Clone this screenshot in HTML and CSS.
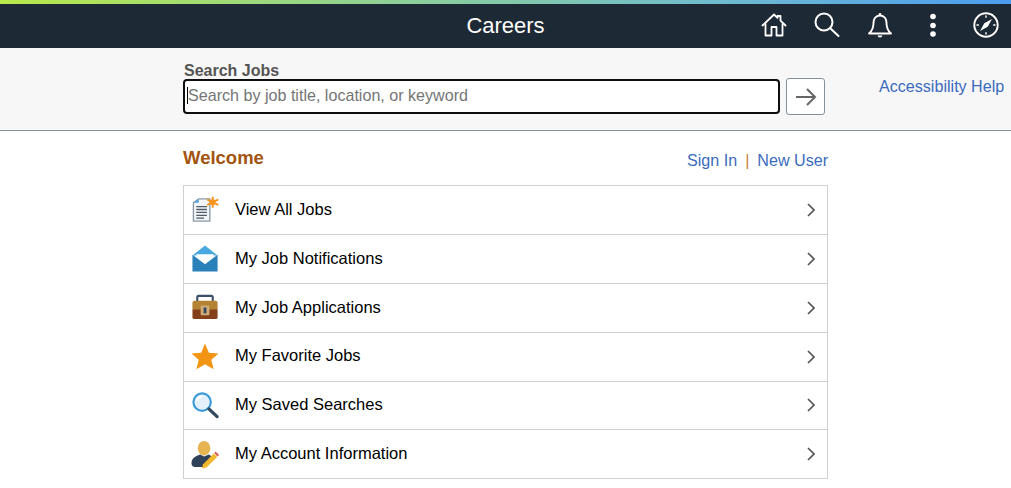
FILE: index.html
```html
<!DOCTYPE html>
<html lang="en">
<head>
<meta charset="utf-8">
<title>Careers</title>
<link rel="stylesheet" href="styles.css">
</head>
<body>
<header class="banner">
  <h1 class="banner-title">Careers</h1>
  <nav class="banner-icons">
    <a class="banner-icon" aria-label="Home"><svg width="28" height="28" viewBox="0 0 28 28" fill="none" stroke="#fff" stroke-width="1.800" stroke-linejoin="round" stroke-linecap="round"><path d="M2.500 14.500 14 3.500l3.500 3.300V5h3v4.600l5 4.900"/><path d="M5.500 13v11.500h6V16h5v8.500h6V13"/></svg></a>
    <a class="banner-icon" aria-label="Search"><svg width="28" height="28" viewBox="0 0 28 28" fill="none" stroke="#fff" stroke-width="2" stroke-linecap="round"><circle cx="11" cy="11" r="8.500"/><path d="m17.500 17.500 8 7.500"/></svg></a>
    <a class="banner-icon" aria-label="Notifications"><svg width="28" height="28" viewBox="0 0 28 28" fill="none" stroke="#fff" stroke-width="1.900" stroke-linejoin="round"><path d="M14 4.500c-4.500 0-6.500 3.500-6.500 7.500 0 5-1.500 8-4.500 10.500h22c-3-2.500-4.500-5.500-4.500-10.500 0-4-2-7.500-6.500-7.500Z"/><circle cx="14" cy="3.300" r="1.300" fill="#fff" stroke="none"/><path d="M11.500 24.500a2.600 2.600 0 0 0 5 0Z" fill="#fff" stroke="none"/></svg></a>
    <a class="banner-icon" aria-label="Actions"><svg width="28" height="28" viewBox="0 0 28 28" fill="#fff"><circle cx="14" cy="5.500" r="2.800"/><circle cx="14" cy="14.500" r="2.800"/><circle cx="14" cy="23" r="2.800"/></svg></a>
    <a class="banner-icon" aria-label="Navigator"><svg width="28" height="28" viewBox="0 0 28 28" fill="none" stroke="#fff" stroke-width="1.900" stroke-linecap="round"><circle cx="14" cy="14" r="11.700"/><path d="M20 8 12.300 12.300 8 20 15.700 15.700Z" fill="#fff" stroke="none"/><path d="M14 5v1.300M14 21.700V23M5 14h1.300M21.700 14H23" stroke-width="1.400"/></svg></a>
  </nav>
</header>

<section class="search-band">
  <form class="search-form">
    <label class="search-label" for="q">Search Jobs</label>
    <div class="search-row">
      <div class="search-input" id="q"><span class="caret"></span><span class="placeholder">Search by job title, location, or keyword</span></div>
      <button class="search-go" type="button" aria-label="Search"><svg width="22" height="20" viewBox="0 0 22 20" fill="none" stroke="#666" stroke-width="2"><path d="M1 10h19M12 2l8 8-8 8"/></svg></button>
    </div>
  </form>
  <a class="help-link">Accessibility Help</a>
</section>

<main class="content">
  <div class="welcome-row">
    <h2 class="welcome">Welcome</h2>
    <div class="auth-links"><a>Sign In</a><span class="sep">|</span><a>New User</a></div>
  </div>
  <ul class="menu">
    <li class="menu-row">
      <svg class="menu-icon" viewBox="0.500 0 30 30"><path d="M3 8 8.500 4H20v23H3Z" fill="#f2f5f7" stroke="#8a9aa6" stroke-width="1.400"/><path d="M3 8h5.500V4Z" fill="#57a5d8"/><path d="M6 12h11M6 15h11M6 18h11M6 21h11M6 24h8" stroke="#4f5b66" stroke-width="1.300"/><circle cx="23" cy="7.500" r="3" fill="#f7941d"/><g stroke="#f7941d" stroke-width="2" stroke-linecap="round"><path d="M23 2.500v10M18 5l10 5M18 10l10-5"/></g></svg>
      <span class="menu-label">View All Jobs</span>
      <svg class="chev" width="8" height="14" viewBox="0 0 8 14" fill="none" stroke="#555" stroke-width="1.700"><path d="m1 1 6 6-6 6"/></svg>
    </li>
    <li class="menu-row">
      <svg class="menu-icon" viewBox="0.500 0 30 30"><path d="M2 12 15 1.500 28 12Z" fill="#4aa8e0"/><path d="M2 11v17.500h26V11L15 21Z" fill="#2a80b9"/><path d="M6 10.500h18v1.500L15 19 6 12Z" fill="#fff"/></svg>
      <span class="menu-label">My Job Notifications</span>
      <svg class="chev" width="8" height="14" viewBox="0 0 8 14" fill="none" stroke="#555" stroke-width="1.700"><path d="m1 1 6 6-6 6"/></svg>
    </li>
    <li class="menu-row">
      <svg class="menu-icon" viewBox="0.500 0 30 30"><path d="M7 9V4.500Q7 3 8.500 3h13Q23 3 23 4.500V9" fill="none" stroke="#3c5068" stroke-width="2.200"/><rect x="2" y="8" width="26" height="10" rx="2" fill="#b38233"/><path d="M2 17h26v8q0 2-2 2H4q-2 0-2-2Z" fill="#84401b"/><rect x="10.500" y="13" width="9" height="10" rx="1" fill="#d2ad78"/><rect x="13.500" y="15" width="3" height="6" fill="#35495e"/></svg>
      <span class="menu-label">My Job Applications</span>
      <svg class="chev" width="8" height="14" viewBox="0 0 8 14" fill="none" stroke="#555" stroke-width="1.700"><path d="m1 1 6 6-6 6"/></svg>
    </li>
    <li class="menu-row">
      <svg class="menu-icon" viewBox="0.500 0 30 30"><path d="m15 1.500 4 9.500 10 .8-7.500 6.600 2.400 9.900L15 23l-8.900 5.300 2.400-9.900L1 11.800 11 11Z" fill="#f39414"/></svg>
      <span class="menu-label">My Favorite Jobs</span>
      <svg class="chev" width="8" height="14" viewBox="0 0 8 14" fill="none" stroke="#555" stroke-width="1.700"><path d="m1 1 6 6-6 6"/></svg>
    </li>
    <li class="menu-row">
      <svg class="menu-icon" viewBox="0.500 0 30 30"><circle cx="12" cy="11.500" r="9" fill="#e4f1fa" stroke="#3a9ad9" stroke-width="2.200"/><path d="M7 10q1-4 5-4.500" fill="none" stroke="#fff" stroke-width="2"/><path d="m19 18.500 8.500 8" stroke="#33495e" stroke-width="3.400" stroke-linecap="round"/></svg>
      <span class="menu-label">My Saved Searches</span>
      <svg class="chev" width="8" height="14" viewBox="0 0 8 14" fill="none" stroke="#555" stroke-width="1.700"><path d="m1 1 6 6-6 6"/></svg>
    </li>
    <li class="menu-row">
      <svg class="menu-icon" viewBox="0.500 0 30 30"><ellipse cx="14" cy="8.500" rx="6.500" ry="7.500" fill="#e6b450"/><path d="M1 24c0-6 6-8 9-9l4 2 5-2 3 2-8 11H6q-5 0-5-4Z" fill="#2f4257"/><path d="m13 25 11-11 3.500 3.500-11 11-4.500 1Z" fill="#f1b72f"/><path d="m24.500 13.500 1.500-1.500 3.500 3.500L28 17Z" fill="#e0584f"/></svg>
      <span class="menu-label">My Account Information</span>
      <svg class="chev" width="8" height="14" viewBox="0 0 8 14" fill="none" stroke="#555" stroke-width="1.700"><path d="m1 1 6 6-6 6"/></svg>
    </li>
  </ul>
</main>
</body>
</html>
```
FILE: styles.css
```css
* { box-sizing: border-box; }
html, body { margin: 0; padding: 0; }
body {
  background: #fff;
  font-family: "Liberation Sans", Arial, sans-serif;
  color: #000;
  overflow: hidden;
}
a { color: #3a6bbd; text-decoration: none; }

.banner {
  height: 48px;
  border-top: 4px solid;
  border-image: linear-gradient(90deg, #b9e94a 0%, #8dcf98 40%, #6fbad0 72%, #4b9cf0 100%) 1;
  background: #1e2936;
  display: flex;
  align-items: center;
  justify-content: center;
  position: relative;
}
.banner-title {
  margin: 0;
  color: #fff;
  font-size: 22px;
  font-weight: 400;
}
.banner-icons {
  position: absolute;
  right: -1px;
  top: -1px;
  height: 44px;
  display: flex;
  align-items: center;
}
.banner-icon {
  width: 53px;
  height: 28px;
  display: flex;
  justify-content: center;
}

.search-band {
  height: 83px;
  background: #f7f7f7;
  border-bottom: 1px solid #87919a;
  padding-left: 183px;
  display: flex;
  position: relative;
}
.search-form { width: 642px; padding-top: 14px; }
.search-label {
  display: block;
  color: #555;
  font-size: 16px;
  font-weight: 700;
  line-height: 17px;
  padding-left: 1px;
}
.search-row { display: flex; align-items: center; gap: 6px; margin-top: -1px; }
.search-input {
  width: 597px;
  height: 35px;
  border: 2px solid #0e0e0e;
  border-radius: 4px;
  background: #fff;
  display: flex;
  align-items: center;
  padding: 0 0 2px 2px;
  margin-top: -1px;
}
.caret { width: 1px; height: 17px; background: #000; }
.placeholder { color: #757575; font-size: 16.100px; }
.search-go {
  width: 39px;
  height: 37px;
  padding: 0;
  border: 1px solid #87919a;
  border-radius: 3px;
  background: #fff;
  display: flex;
  align-items: center;
  justify-content: center;
}
.help-link { margin: 29px 0 0 54px; font-size: 16.100px; line-height: 18px; white-space: nowrap; }

.content { margin-left: 183px; width: 645px; }
.welcome-row {
  height: 54px;
  display: flex;
  justify-content: space-between;
  align-items: center;
}
.welcome { margin: 0 0 1px; color: #a3540f; font-size: 18.500px; font-weight: 700; }
.auth-links { font-size: 16.100px; margin-top: 4px; }
.sep { color: #c77f3c; margin: 0 8px; }
.menu {
  list-style: none;
  margin: 0;
  padding: 0;
  border: 1px solid #d0d0d0;
  border-bottom: 0;
}
.menu-row {
  height: 48.900px;
  border-bottom: 1px solid #d0d0d0;
  padding: 0 12px 0 7px;
  display: flex;
  align-items: center;
  font-size: 16.500px;
}
.menu-icon { width: 29px; height: 29px; flex: none; }
.menu-label { margin: 0 0 1.400px 15px; flex: 1; }
.chev { flex: none; margin-bottom: 0.200px; }
```
